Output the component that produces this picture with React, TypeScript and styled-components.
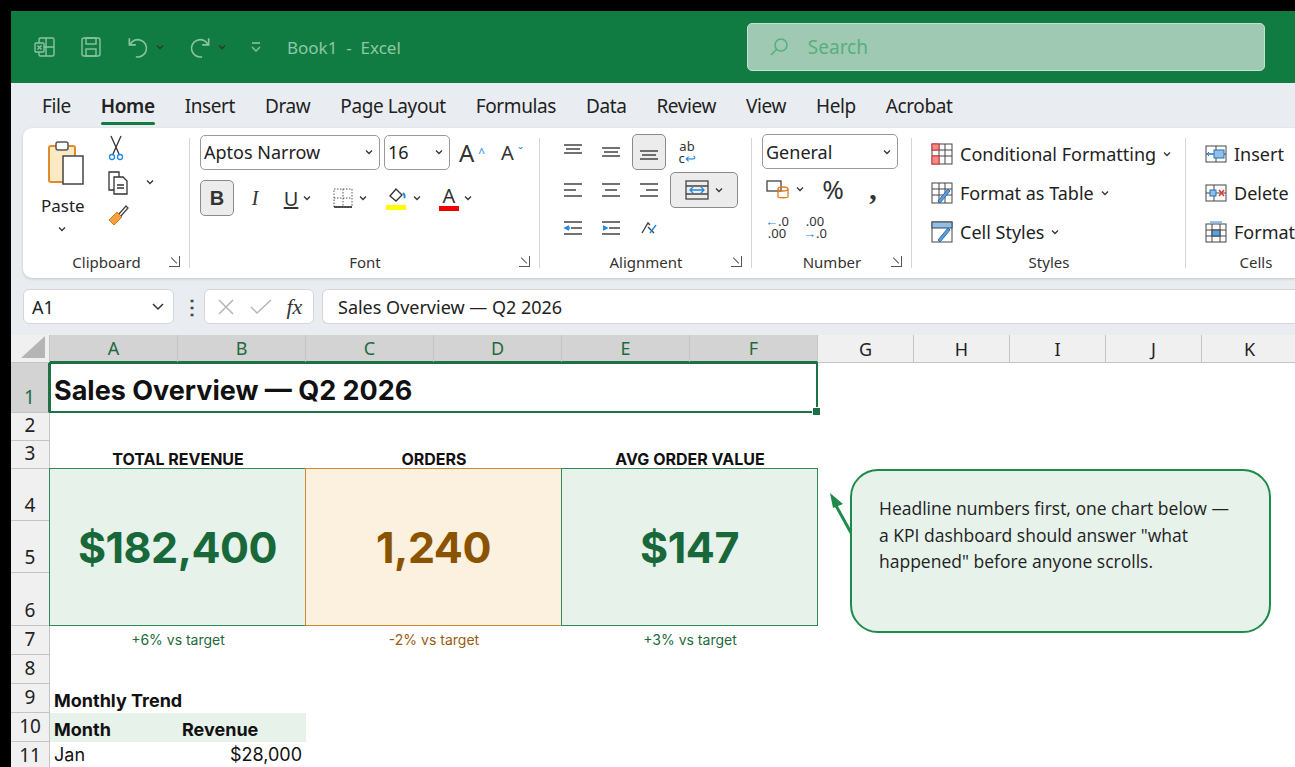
import React from "react";
import styled, { createGlobalStyle } from "styled-components";

const Global = createGlobalStyle`
  html, body { margin: 0; padding: 0; background: #000; overflow: hidden; }
  * { box-sizing: border-box; }
`;

const UI = `"Noto Sans", "Open Sans", sans-serif`;
const CELL = `"Inter", "Noto Sans", sans-serif`;

const Frame = styled.div`
  position: absolute; left: 11px; top: 11px; right: 0; bottom: 0;
  background: #e9edf1; font-family: ${UI}; overflow: hidden;
  display: flex; flex-direction: column;
`;
const TitleBar = styled.div`
  height: 72px; background: #107c41; display: flex; align-items: center;
  padding-left: 22px; color: #8cc3a3; flex-shrink: 0;
`;
const QuickIcons = styled.div` display: flex; align-items: center; gap: 22px; `;
const TitleText = styled.div` font-size: 17px; margin-left: 24px; color: #8ec8a6; `;
const SearchBox = styled.div`
  margin-left: 346px; width: 518px; height: 48px; border-radius: 5px;
  background: #9fc9b2; border: 1px solid #c6e0d1; display: flex; align-items: center;
  padding-left: 20px; gap: 18px; color: #55b07d; font-size: 19px;
`;
const Tabs = styled.div`
  height: 45px; display: flex; align-items: center; gap: 30px; padding-left: 31px; flex-shrink: 0;
`;
const Tab = styled.div<{ $active?: boolean }>`
  font-size: 19px; color: #222; position: relative; font-weight: ${p => (p.$active ? 600 : 400)};
  letter-spacing: -0.4px;
  &::after { content: ""; display: ${p => (p.$active ? "block" : "none")}; position: absolute;
    left: 0; right: 0; bottom: -6px; height: 3px; border-radius: 2px; background: #107c41; }
`;
const Ribbon = styled.div`
  margin-left: 12px; height: 150px; background: #fff; border-radius: 9px 0 0 9px;
  box-shadow: 0 1px 3px rgba(0,0,0,0.18); display: flex; flex-shrink: 0; padding-top: 6px;
`;
const Group = styled.div<{ $w: number }>`
  width: ${p => p.$w}px; flex-shrink: 0; display: flex; flex-direction: column;
  position: relative; padding-bottom: 2px;
  &:not(:last-child)::after { content: ""; position: absolute; right: 0; top: 4px; bottom: 10px; width: 1px; background: #d6d6d6; }
`;
const GroupBody = styled.div` flex: 1; display: flex; padding: 0 10px; gap: 6px; min-height: 0; `;
const GroupLabel = styled.div`
  height: 24px; text-align: center; font-size: 15px; color: #333; position: relative; flex-shrink: 0;
`;
const Launcher = styled.span`
  position: absolute; right: 10px; top: 4px; width: 11px; height: 11px;
  border: 1px solid #555; border-width: 0 1px 1px 0;
  &::before { content: ""; position: absolute; left: 1px; top: 4px; width: 8px; height: 1px; background: #555; transform: rotate(45deg); }
`;
const Col = styled.div<{ $gap?: number }>` display: flex; flex-direction: column; gap: ${p => p.$gap ?? 0}px; `;
const Row = styled.div<{ $gap?: number }>` display: flex; align-items: center; gap: ${p => p.$gap ?? 0}px; `;
const Select = styled.div<{ $w: number }>`
  width: ${p => p.$w}px; height: 35px; border: 1px solid #9a9a9a; border-radius: 5px;
  display: flex; align-items: center; justify-content: space-between; padding: 0 5px 0 3px;
  font-size: 18px; color: #222; flex-shrink: 0;
`;
const IconBtn = styled.div<{ $on?: boolean; $w?: number }>`
  height: 36px; min-width: ${p => p.$w ?? 34}px; display: flex; align-items: center; justify-content: center; gap: 4px;
  border-radius: 5px; font-size: 20px; color: #333;
  background: ${p => (p.$on ? "#ececec" : "transparent")}; border: 1px solid ${p => (p.$on ? "#8a8a8a" : "transparent")};
`;
const Tiny = styled.div`
  display: flex; flex-direction: column; align-items: center; font-size: 13px; line-height: 12px; color: #333;
`;
const StyleItem = styled.div` display: flex; align-items: center; gap: 6px; font-size: 18px; color: #222; height: 39px; `;
const Chev = () => (
  <svg width="10" height="10" viewBox="0 0 10 10"><path d="M2 3.5l3 3 3-3" stroke="#333" strokeWidth="1.3" fill="none" /></svg>
);

const FormulaRow = styled.div`
  height: 57px; display: flex; align-items: center; padding-left: 12px; gap: 8px; flex-shrink: 0;
`;
const NameBox = styled.div`
  width: 151px; height: 35px; background: #fff; border: 1px solid #d6d6d6; border-radius: 6px;
  display: flex; align-items: center; justify-content: space-between; padding: 0 8px; font-size: 18px; color: #222;
`;
const FxBox = styled.div`
  width: 110px; height: 35px; background: #fff; border: 1px solid #d6d6d6; border-radius: 6px;
  display: flex; align-items: center; justify-content: space-around; padding: 0 4px; color: #aaa;
`;
const FormulaInput = styled.div`
  flex: 1; height: 35px; background: #fff; border: 1px solid #d6d6d6; border-right: none; border-radius: 6px 0 0 6px;
  display: flex; align-items: center; padding-left: 15px; font-size: 18px; color: #222;
`;

const Sheet = styled.div`
  position: relative; flex: 1; background: #fff;
  display: grid;
  grid-template-columns: 39px repeat(6, 128px) repeat(5, 96px);
  grid-template-rows: 28px 50px 28px 28px 52px 52px 53px 29px 29px 29px 29px 29px;
  font-family: ${CELL};
`;
const ColHead = styled.div<{ $sel?: boolean }>`
  background: ${p => (p.$sel ? "#d3d3d3" : "#f0f0f0")}; color: ${p => (p.$sel ? "#1d6b3c" : "#222")};
  border-right: 1px solid #c4c4c4; border-bottom: ${p => (p.$sel ? "2px solid #1e7145" : "1px solid #c4c4c4")};
  display: flex; align-items: center; justify-content: center; font-size: 18px; font-family: ${UI};
`;
const Corner = styled.div`
  background: #f0f0f0; border-right: 1px solid #c4c4c4; border-bottom: 1px solid #c4c4c4; position: relative;
  &::after { content: ""; position: absolute; right: 4px; bottom: 4px; border-left: 24px solid transparent; border-bottom: 22px solid #b5b5b5; }
`;
const RowHead = styled.div<{ $sel?: boolean; $r: number }>`
  grid-row: ${p => p.$r + 1}; grid-column: 1;
  background: ${p => (p.$sel ? "#d3d3d3" : "#f0f0f0")}; color: ${p => (p.$sel ? "#1d6b3c" : "#222")};
  border-bottom: 1px solid #c4c4c4; border-right: ${p => (p.$sel ? "2px solid #1e7145" : "1px solid #c4c4c4")};
  display: flex; align-items: flex-end; justify-content: center; padding-bottom: 2px; font-size: 19px; font-family: ${UI};
`;
const Cell = styled.div<{ $r: string; $c: string; $align?: string; $size?: number; $weight?: number; $color?: string; $bg?: string }>`
  grid-row: ${p => p.$r}; grid-column: ${p => p.$c}; z-index: 1;
  display: flex; align-items: flex-end; justify-content: ${p => p.$align ?? "flex-start"};
  padding: 0 4px 1px 4px; font-size: ${p => p.$size ?? 18}px; font-weight: ${p => p.$weight ?? 400};
  color: ${p => p.$color ?? "#111"}; background: ${p => p.$bg ?? "transparent"}; white-space: nowrap;
  line-height: 1.15;
`;
const Kpi = styled.div<{ $c: string; $bg: string; $bd: string; $fg: string }>`
  grid-row: 5 / 8; grid-column: ${p => p.$c}; z-index: 1;
  background: ${p => p.$bg}; border: 1px solid ${p => p.$bd};
  display: flex; align-items: center; justify-content: center; letter-spacing: -0.5px;
  font-size: 43px; font-weight: 700; color: ${p => p.$fg}; margin-left: -1px; margin-top: -1px;
`;
const Selection = styled.div`
  grid-row: 2; grid-column: 2 / 8; z-index: 2; border: 2px solid #1e7145; margin: -1px 0 0 -1px; position: relative;
  &::after { content: ""; position: absolute; right: -5px; bottom: -5px; width: 7px; height: 7px; background: #1e7145; border: 1px solid #fff; }
`;
const Callout = styled.div`
  position: absolute; left: 839px; top: 134px; width: 421px; height: 164px; z-index: 3;
  border: 2px solid #1e8a4c; border-radius: 28px; background: #e6f2ea;
  padding: 24px 34px 0 27px; font-family: "Open Sans", "Noto Sans", sans-serif; font-size: 17.5px; line-height: 26.5px; color: #222;
`;
const Arrow = styled.svg` position: absolute; left: 800px; top: 150px; z-index: 3; `;

const cols = ["A", "B", "C", "D", "E", "F", "G", "H", "I", "J", "K"];

export default function App() {
  return (
    <>
      <Global />
      <Frame>
        <TitleBar>
          <QuickIcons>
            <svg width="24" height="24" viewBox="0 0 24 24" fill="none" stroke="#8cc3a3" strokeWidth="1.4"><rect x="6" y="3" width="15" height="18" rx="1.5" /><path d="M13 3v18M6 12h15" /><rect x="2" y="8" width="9" height="9" rx="1" fill="#107c41" /><path d="M4.5 10.5l4 4M8.5 10.5l-4 4" /></svg>
            <svg width="24" height="24" viewBox="0 0 24 24" fill="none" stroke="#8cc3a3" strokeWidth="1.4"><rect x="3" y="3" width="18" height="18" rx="2" /><rect x="7" y="3" width="10" height="6" /><rect x="7" y="14" width="10" height="7" /></svg>
            <Row $gap={4}><svg width="26" height="26" viewBox="0 0 24 24" fill="none" stroke="#8cc3a3" strokeWidth="1.5"><path d="M4 4v6h6" /><path d="M4.5 10A8 8 0 1 1 10 21" /></svg><Chev /></Row>
            <Row $gap={4}><svg width="26" height="26" viewBox="0 0 24 24" fill="none" stroke="#8cc3a3" strokeWidth="1.5"><path d="M20 4v6h-6" /><path d="M19.5 10A8 8 0 1 0 14 21" /></svg><Chev /></Row>
            <svg width="14" height="14" viewBox="0 0 14 14" stroke="#8cc3a3" strokeWidth="1.3" fill="none"><path d="M3 3h8M3 7l4 4 4-4" /></svg>
          </QuickIcons>
          <TitleText>Book1&nbsp; - &nbsp;Excel</TitleText>
          <SearchBox>
            <svg width="22" height="22" viewBox="0 0 22 22" fill="none" stroke="#55b07d" strokeWidth="1.6"><circle cx="13" cy="9" r="6" /><path d="M8.5 13.5L3 19" /></svg>
            Search
          </SearchBox>
        </TitleBar>
        <Tabs>
          {["File", "Home", "Insert", "Draw", "Page Layout", "Formulas", "Data", "Review", "View", "Help", "Acrobat"].map(t => (
            <Tab key={t} $active={t === "Home"}>{t}</Tab>
          ))}
        </Tabs>
        <Ribbon>
          <Group $w={167}>
            <GroupBody>
              <Col $gap={0}>
                <svg width="48" height="56" viewBox="0 0 48 56" style={{ marginLeft: 10, marginTop: 4 }}>
                  <rect x="6" y="8" width="26" height="36" rx="2" fill="#fde9c4" stroke="#e08a2c" strokeWidth="2" />
                  <rect x="13" y="4" width="12" height="8" rx="2" fill="#fff" stroke="#555" strokeWidth="1.5" />
                  <rect x="20" y="18" width="20" height="28" fill="#fff" stroke="#444" strokeWidth="1.5" />
                </svg>
                <div style={{ fontSize: 17, marginLeft: 8, color: "#222" }}>Paste</div>
                <div style={{ marginLeft: 24 }}><Chev /></div>
              </Col>
              <Col $gap={6} style={{ marginLeft: 8 }}>
                <svg width="22" height="28" viewBox="0 0 22 28" fill="none" stroke="#333" strokeWidth="1.3"><path d="M6 2l8 18M16 2L8 20" /><circle cx="7" cy="23" r="2.5" stroke="#1e88e5" /><circle cx="15" cy="23" r="2.5" stroke="#1e88e5" /></svg>
                <Row $gap={14}><svg width="26" height="28" viewBox="0 0 26 28" fill="none" stroke="#333" strokeWidth="1.3"><path d="M4 4h10v18H4z" /><path d="M9 9h9l4 4v13H9z" fill="#fff" /><path d="M12 17h7M12 20h7" /></svg><Chev /></Row>
                <svg width="26" height="26" viewBox="0 0 26 26"><path d="M4 18l8-8 5 5-8 8z" fill="#f4a340" stroke="#d9791e" /><path d="M14 12l7-8 2 2-7 8" fill="none" stroke="#444" strokeWidth="1.3" /></svg>
              </Col>
            </GroupBody>
            <GroupLabel>Clipboard<Launcher /></GroupLabel>
          </Group>
          <Group $w={350}>
            <GroupBody>
              <Col $gap={10}>
                <Row $gap={4}>
                  <Select $w={180}>Aptos Narrow<Chev /></Select>
                  <Select $w={66}>16<Chev /></Select>
                  <IconBtn $w={36} style={{ fontSize: 24 }}>A<sup style={{ fontSize: 12, color: "#1e88e5" }}>^</sup></IconBtn>
                  <IconBtn $w={36}>A<sup style={{ fontSize: 12, color: "#1e88e5" }}>ˇ</sup></IconBtn>
                </Row>
                <Row $gap={6}>
                  <IconBtn $on $w={34} style={{ fontWeight: 700, fontFamily: "Liberation Sans" }}>B</IconBtn>
                  <IconBtn $w={30} style={{ fontStyle: "italic", fontFamily: "Liberation Serif" }}>I</IconBtn>
                  <IconBtn $w={44}><span style={{ textDecoration: "underline" }}>U</span><Chev /></IconBtn>
                  <IconBtn $w={48}><svg width="22" height="22" viewBox="0 0 22 22" fill="none" stroke="#555" strokeDasharray="1.5 1.5"><rect x="2" y="2" width="18" height="18" /><path d="M11 2v18M2 11h18" /><path d="M2 20h18" strokeDasharray="0" stroke="#222" strokeWidth="1.5" /></svg><Chev /></IconBtn>
                  <IconBtn $w={48}><Col><svg width="22" height="18" viewBox="0 0 22 18" fill="none" stroke="#333" strokeWidth="1.3"><path d="M4 9l6-7 6 6-6 6z" /><path d="M17 6c2 2 2 4 1 5" stroke="#1e88e5" strokeWidth="2" /></svg><div style={{ width: 20, height: 5, background: "#ffff00" }} /></Col><Chev /></IconBtn>
                  <IconBtn $w={44}><Col style={{ alignItems: "center", lineHeight: "20px" }}>A<div style={{ width: 20, height: 5, background: "#f00000" }} /></Col><Chev /></IconBtn>
                </Row>
              </Col>
            </GroupBody>
            <GroupLabel>Font<Launcher /></GroupLabel>
          </Group>
          <Group $w={212}>
            <GroupBody style={{ paddingLeft: 16 }}>
              <Col $gap={2}>
                {[0, 1, 2].map(r => (
                  <Row key={r} $gap={4}>
                    {[0, 1, 2].map(i => (
                      <IconBtn key={i} $on={r === 0 && i === 2} $w={34}>
                        <svg width="22" height="18" viewBox="0 0 22 18" stroke="#444" strokeWidth="1.4" fill="none">
                          {r === 2 && i === 2 ? <><path d="M4 14l6-10 2 2M10 8l6 6" stroke="#444" /><path d="M12 14l6-8" stroke="#1e88e5" /></> : r === 2 ? <><path d="M2 3h18M9 9h11M2 15h18" /><path d={i === 0 ? "M7 7L3 9l4 2M3 9h5" : "M3 7l4 2-4 2M3 9h4"} stroke="#1e88e5" /></> : r === 0 ? <><path d={i === 0 ? "M2 2h18M4 6h14M2 10h18" : i === 1 ? "M2 5h18M4 9h14M2 13h18" : "M2 8h18M4 12h14M2 16h18"} /></> : <><path d={i === 0 ? "M2 3h18M2 9h12M2 15h18" : i === 1 ? "M2 3h18M5 9h12M2 15h18" : "M2 3h18M8 9h12M2 15h18"} /></>}
                        </svg>
                      </IconBtn>
                    ))}
                    {r === 0 && <IconBtn $w={34}><Tiny><span>ab</span><span>c<span style={{ color: "#1e88e5" }}>↩</span></span></Tiny></IconBtn>}
                    {r === 1 && <IconBtn $on $w={68}><svg width="26" height="22" viewBox="0 0 26 22" fill="none" stroke="#444" strokeWidth="1.3"><rect x="2" y="2" width="22" height="18" /><path d="M2 7h22M2 15h22" /><path d="M6 11h14M9 8l-3 3 3 3M17 8l3 3-3 3" stroke="#1e88e5" /></svg><Chev /></IconBtn>}
                  </Row>
                ))}
              </Col>
            </GroupBody>
            <GroupLabel>Alignment<Launcher /></GroupLabel>
          </Group>
          <Group $w={160}>
            <GroupBody>
              <Col $gap={2}>
                <Select $w={136}>General<Chev /></Select>
                <Row $gap={10}>
                  <IconBtn $w={46}><svg width="26" height="24" viewBox="0 0 26 24" fill="none" strokeWidth="1.3"><rect x="2" y="4" width="14" height="10" stroke="#444" /><ellipse cx="18" cy="12" rx="5" ry="2" stroke="#e07a1f" /><path d="M13 12v8c0 1 10 1 10 0v-8" stroke="#e07a1f" /></svg><Chev /></IconBtn>
                  <IconBtn $w={30} style={{ fontSize: 26 }}>%</IconBtn>
                  <IconBtn $w={30} style={{ fontSize: 30, fontWeight: 700, fontFamily: "Liberation Serif" }}>,</IconBtn>
                </Row>
                <Row $gap={8}>
                  <IconBtn $w={30}><Tiny><span><span style={{ color: "#1e88e5" }}>←</span>.0</span><span>.00</span></Tiny></IconBtn>
                  <IconBtn $w={30}><Tiny><span>.00</span><span><span style={{ color: "#1e88e5" }}>→</span>.0</span></Tiny></IconBtn>
                </Row>
              </Col>
            </GroupBody>
            <GroupLabel>Number<Launcher /></GroupLabel>
          </Group>
          <Group $w={274}>
            <GroupBody style={{ paddingLeft: 18 }}>
              <Col>
                <StyleItem><svg width="24" height="24" viewBox="0 0 24 24" fill="none" stroke="#444"><rect x="2" y="2" width="20" height="20" /><path d="M2 8h20M2 14h20M9 2v20M15 2v20" /><rect x="2" y="2" width="7" height="6" fill="#f28b8b" stroke="#d33" /><rect x="2" y="14" width="7" height="8" fill="#f28b8b" stroke="#d33" /></svg>Conditional Formatting <Chev /></StyleItem>
                <StyleItem><svg width="24" height="24" viewBox="0 0 24 24" fill="none" stroke="#444"><rect x="2" y="2" width="20" height="20" /><path d="M2 8h20M2 14h20M9 2v20M15 2v20" /><path d="M8 20l10-12 2 2-10 12z" fill="#5aa0e0" stroke="#2b6cb0" /></svg>Format as Table <Chev /></StyleItem>
                <StyleItem><svg width="24" height="24" viewBox="0 0 24 24" fill="none" stroke="#444"><rect x="2" y="2" width="20" height="20" /><rect x="2" y="2" width="20" height="6" fill="#8ec0ea" /><path d="M8 20l10-12 2 2-10 12z" fill="#5aa0e0" stroke="#2b6cb0" /></svg>Cell Styles <Chev /></StyleItem>
              </Col>
            </GroupBody>
            <GroupLabel>Styles</GroupLabel>
          </Group>
          <Group $w={140}>
            <GroupBody style={{ paddingLeft: 18 }}>
              <Col>
                <StyleItem><svg width="24" height="24" viewBox="0 0 24 24" fill="none" stroke="#444"><rect x="2" y="4" width="20" height="16" /><path d="M2 12h20M12 4v16" /><rect x="10" y="8" width="10" height="8" fill="#8ec0ea" stroke="#2b6cb0" /><path d="M9 12H3M5 10l-2 2 2 2" stroke="#1e88e5" /></svg>Insert</StyleItem>
                <StyleItem><svg width="24" height="24" viewBox="0 0 24 24" fill="none" stroke="#444"><rect x="2" y="4" width="20" height="16" /><path d="M2 12h20M10 4v16" /><rect x="6" y="9" width="6" height="6" fill="#8ec0ea" stroke="#2b6cb0" /><path d="M15 9l5 6M20 9l-5 6" stroke="#e53935" strokeWidth="1.6" /></svg>Delete</StyleItem>
                <StyleItem><svg width="24" height="24" viewBox="0 0 24 24" fill="none" stroke="#444"><rect x="2" y="4" width="20" height="18" /><path d="M2 10h20M2 16h20M8 4v18M16 4v18" /><rect x="8" y="10" width="8" height="6" fill="#5aa0e0" /><path d="M6 2h12" stroke="#1e88e5" /></svg>Format</StyleItem>
              </Col>
            </GroupBody>
            <GroupLabel>Cells</GroupLabel>
          </Group>
        </Ribbon>
        <FormulaRow>
          <NameBox>A1<svg width="14" height="10" viewBox="0 0 14 10"><path d="M2 2l5 5 5-5" stroke="#333" strokeWidth="1.5" fill="none" /></svg></NameBox>
          <div style={{ color: "#444", fontSize: 20, fontWeight: 700, width: 14, textAlign: "center" }}>⋮</div>
          <FxBox>
            <svg width="20" height="20" viewBox="0 0 20 20" stroke="#b5b5b5" strokeWidth="1.5"><path d="M3 3l14 14M17 3L3 17" /></svg>
            <svg width="24" height="20" viewBox="0 0 24 20" stroke="#b5b5b5" strokeWidth="1.5" fill="none"><path d="M2 10l6 6L22 3" /></svg>
            <span style={{ fontFamily: "Liberation Serif", fontStyle: "italic", fontSize: 22, color: "#333" }}>fx</span>
          </FxBox>
          <FormulaInput>Sales Overview — Q2 2026</FormulaInput>
        </FormulaRow>
        <Sheet>
          <Corner />
          {cols.map((c, i) => <ColHead key={c} $sel={i < 6}>{c}</ColHead>)}
          {Array.from({ length: 11 }, (_, i) => <RowHead key={i} $r={i + 1} $sel={i === 0}>{i + 1}</RowHead>)}
          <Cell $r="2" $c="2 / 8" $size={27} $weight={700} style={{ alignItems: "center", paddingTop: 6 }}>Sales Overview — Q2 2026</Cell>
          <Selection />
          <Cell $r="4" $c="2 / 4" $align="center" $size={16} $weight={700}>TOTAL REVENUE</Cell>
          <Cell $r="4" $c="4 / 6" $align="center" $size={16} $weight={700}>ORDERS</Cell>
          <Cell $r="4" $c="6 / 8" $align="center" $size={16} $weight={700}>AVG ORDER VALUE</Cell>
          <Kpi $c="2 / 4" $bg="#e6f2ea" $bd="#2e8b57" $fg="#18683a">$182,400</Kpi>
          <Kpi $c="4 / 6" $bg="#fcf0de" $bd="#cf8a2e" $fg="#8a5300">1,240</Kpi>
          <Kpi $c="6 / 8" $bg="#e6f2ea" $bd="#2e8b57" $fg="#18683a">$147</Kpi>
          <Cell $r="8" $c="2 / 4" $align="center" $size={14} $color="#1d6b3c" style={{ alignItems: "center" }}>+6% vs target</Cell>
          <Cell $r="8" $c="4 / 6" $align="center" $size={14} $color="#9a5a10" style={{ alignItems: "center" }}>-2% vs target</Cell>
          <Cell $r="8" $c="6 / 8" $align="center" $size={14} $color="#1d6b3c" style={{ alignItems: "center" }}>+3% vs target</Cell>
          <Cell $r="10" $c="2" $size={18} $weight={700}>Monthly Trend</Cell>
          <Cell $r="11" $c="2" $size={18} $weight={700} $bg="#e6f2ea">Month</Cell>
          <Cell $r="11" $c="3" $size={18} $weight={700} $bg="#e6f2ea">Revenue</Cell>
          <Cell $r="12" $c="2" style={{ alignItems: "flex-start", paddingTop: 3 }}>Jan</Cell>
          <Cell $r="12" $c="3" $align="flex-end" style={{ alignItems: "flex-start", paddingTop: 3 }}>$28,000</Cell>
          <Arrow width="60" height="80" viewBox="0 0 60 80">
            <path d="M50 66L23 17" stroke="#1e8a4c" strokeWidth="3" fill="none" />
            <path d="M19 8l13 11-10 4z" fill="#1e8a4c" />
          </Arrow>
          <Callout>Headline numbers first, one chart below — a KPI dashboard should answer "what happened" before anyone scrolls.</Callout>
        </Sheet>
      </Frame>
    </>
  );
}
